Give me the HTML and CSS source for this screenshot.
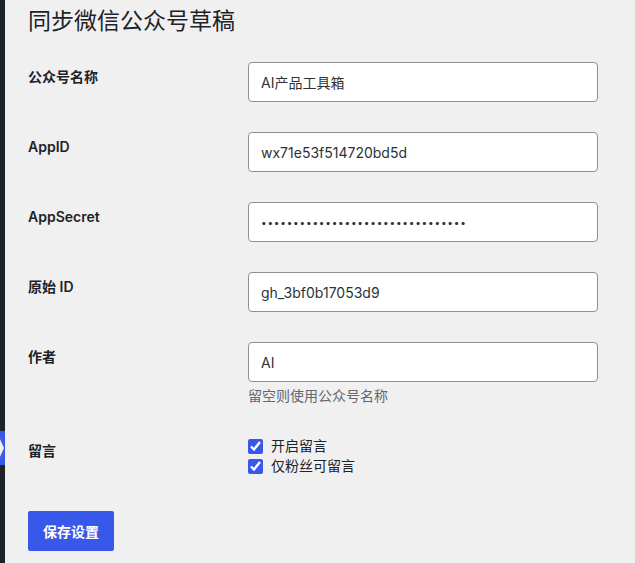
FILE: index.html
```html
<!DOCTYPE html>
<html lang="zh-CN">
<head>
<meta charset="UTF-8" />
<meta name="viewport" content="width=device-width, initial-scale=1" />
<title>同步微信公众号草稿</title>
<link rel="stylesheet" href="styles.css">
</head>
<body>

<div class="menu-edge">
  <div class="menu-current">
    <span class="menu-arrow"></span>
  </div>
</div>

<div class="wrap">
  <h1>同步微信公众号草稿</h1>

  <form id="wechatForm">
    <table class="form-table">
      <tr>
        <th><label for="mp_name">公众号名称</label></th>
        <td><input type="text" id="mp_name" name="mp_name" value="AI产品工具箱" /></td>
      </tr>
      <tr>
        <th><label for="appid">AppID</label></th>
        <td><input type="text" id="appid" name="appid" value="wx71e53f514720bd5d" /></td>
      </tr>
      <tr>
        <th><label for="appsecret">AppSecret</label></th>
        <td><input type="password" id="appsecret" name="appsecret" value="a81c3f0e92b47d5e6f1a20c9b8d7e4f3" /></td>
      </tr>
      <tr>
        <th><label for="origin_id">原始 ID</label></th>
        <td><input type="text" id="origin_id" name="origin_id" value="gh_3bf0b17053d9" /></td>
      </tr>
      <tr>
        <th><label for="author">作者</label></th>
        <td>
          <input type="text" id="author" name="author" value="AI" />
          <p class="description">留空则使用公众号名称</p>
        </td>
      </tr>
      <tr>
        <th>留言</th>
        <td>
          <label class="check"><input type="checkbox" name="open_comment" checked /> 开启留言</label>
          <label class="check"><input type="checkbox" name="fans_only" checked /> 仅粉丝可留言</label>
        </td>
      </tr>
    </table>

    <p class="submit"><button type="submit" class="button-primary">保存设置</button></p>
  </form>
</div>

</body>
</html>
```

FILE: styles.css
```css
body {
  margin: 0;
  background-color: #f0f0f1;
  color: #1d2327;
  font-family: "Inter", "Noto Sans CJK SC", sans-serif;
  font-size: 14px;
  display: flex;
  min-height: 563px;
}
.menu-edge {
  width: 5px;
  flex-shrink: 0;
  background-color: #1d2327;
}
.menu-current {
  position: relative;
  margin-top: 431px;
  height: 34px;
  background-color: #3858e9;
}
.menu-arrow {
  position: absolute;
  left: 0;
  top: 8px;
  width: 4px;
  height: 18px;
  background-color: #f0f0f1;
  clip-path: polygon(0 0, 100% 50%, 0 100%);
}
.wrap {
  padding-left: 23px;
  flex: 1;
}
h1 {
  font-size: 23px;
  font-weight: 400;
  line-height: 30px;
  margin: 0;
  padding-top: 6px;
}
.form-table {
  margin-top: 11px;
  border-collapse: collapse;
}
.form-table th {
  width: 200px;
  padding: 21px 10px 19px 0;
  text-align: left;
  vertical-align: top;
  font-weight: 600;
  line-height: 18px;
}
.form-table td {
  padding: 15px 10px;
  vertical-align: top;
  line-height: 20px;
}
.form-table input[type="text"],
.form-table input[type="password"] {
  width: 350px;
  height: 40px;
  box-sizing: border-box;
  padding: 0 12px;
  border: 1px solid #8c8f94;
  border-radius: 4px;
  background: white;
  color: #2c3338;
  font-family: inherit;
  font-size: 14px;
  display: block;
}
.form-table input[type="password"] {
  font-size: 10px;
  letter-spacing: 0.8px;
}
.description {
  margin: 4px 0 0;
  color: #646970;
}
.check {
  display: flex;
  align-items: center;
  gap: 8px;
  height: 20px;
}
.check input {
  margin: 0;
  width: 15px;
  height: 15px;
  accent-color: #3858e9;
}
.submit {
  margin: 20px 0 0;
}
.button-primary {
  height: 40px;
  padding: 0 15px;
  border: none;
  border-radius: 2px;
  background-color: #3858e9;
  color: white;
  font-family: inherit;
  font-size: 14px;
  font-weight: 600;
  cursor: pointer;
}
.button-primary:hover {
  background-color: #2145e6;
}
```
